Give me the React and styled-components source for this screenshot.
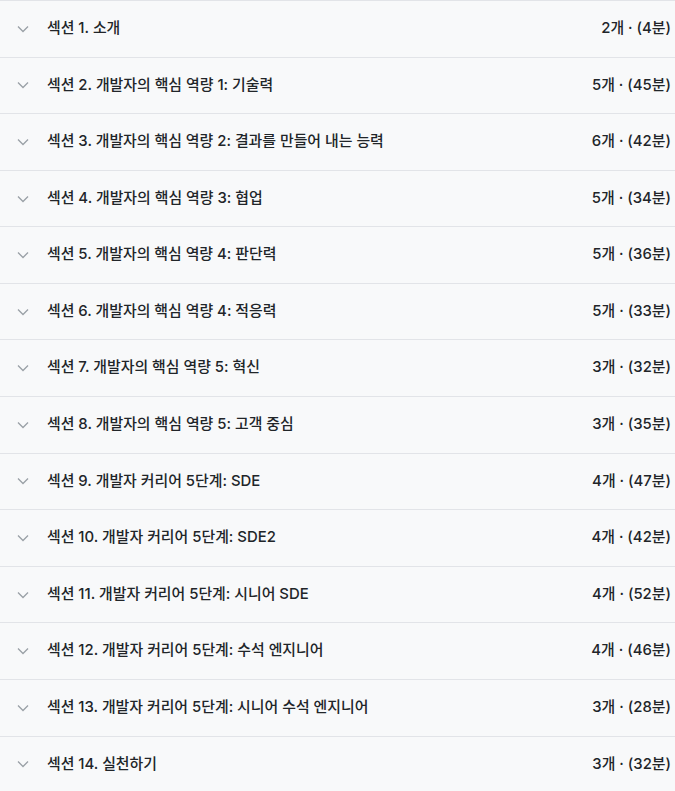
import React from "react";
import styled, { createGlobalStyle } from "styled-components";

const Global = createGlobalStyle`
  html, body {
    margin: 0;
    padding: 0;
    background: #f8f9fa;
  }
  body {
    font-family: Inter, "Noto Sans CJK KR", sans-serif;
  }
`;

const List = styled.div`
  width: 100%;
  background: #f8f9fa;
  border-top: 1px solid #e2e4e8;
`;

const Row = styled.div`
  display: flex;
  align-items: center;
  padding: 16px 4px 16px 16px;
  border-bottom: 1px solid #e2e4e8;
  font-size: 14.9px;
  line-height: 23.58px;
  color: #212529;
  font-weight: 500;
`;

const Chevron = styled.span`
  display: flex;
  width: 14px;
  margin-right: 17px;
  color: #9aa0a6;
`;

const Title = styled.span`
  flex: 1;
`;

const Meta = styled.span`
  white-space: nowrap;
`;

const sections = [
  ["섹션 1. 소개", "2개 · (4분)"],
  ["섹션 2. 개발자의 핵심 역량 1: 기술력", "5개 · (45분)"],
  ["섹션 3. 개발자의 핵심 역량 2: 결과를 만들어 내는 능력", "6개 · (42분)"],
  ["섹션 4. 개발자의 핵심 역량 3: 협업", "5개 · (34분)"],
  ["섹션 5. 개발자의 핵심 역량 4: 판단력", "5개 · (36분)"],
  ["섹션 6. 개발자의 핵심 역량 4: 적응력", "5개 · (33분)"],
  ["섹션 7. 개발자의 핵심 역량 5: 혁신", "3개 · (32분)"],
  ["섹션 8. 개발자의 핵심 역량 5: 고객 중심", "3개 · (35분)"],
  ["섹션 9. 개발자 커리어 5단계: SDE", "4개 · (47분)"],
  ["섹션 10. 개발자 커리어 5단계: SDE2", "4개 · (42분)"],
  ["섹션 11. 개발자 커리어 5단계: 시니어 SDE", "4개 · (52분)"],
  ["섹션 12. 개발자 커리어 5단계: 수석 엔지니어", "4개 · (46분)"],
  ["섹션 13. 개발자 커리어 5단계: 시니어 수석 엔지니어", "3개 · (28분)"],
  ["섹션 14. 실천하기", "3개 · (32분)"],
];

function ChevronDown() {
  return (
    <svg width="14" height="14" viewBox="0 0 14 14" fill="none">
      <path d="M2 4.5l5 5 5-5" stroke="currentColor" strokeWidth="1.3" />
    </svg>
  );
}

export default function App() {
  return (
    <>
      <Global />
      <List>
        {sections.map(([title, meta]) => (
          <Row key={title}>
            <Chevron>
              <ChevronDown />
            </Chevron>
            <Title>{title}</Title>
            <Meta>{meta}</Meta>
          </Row>
        ))}
      </List>
    </>
  );
}
